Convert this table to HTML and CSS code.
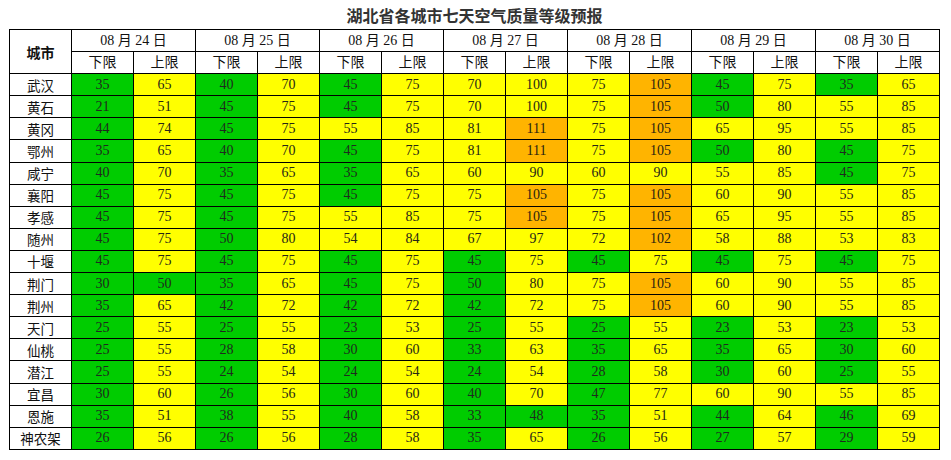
FILE: index.html
```html
<!DOCTYPE html>
<html lang="zh">
<head>
<meta charset="utf-8">
<title>湖北省各城市七天空气质量等级预报</title>
<link rel="stylesheet" href="styles.css">
</head>
<body>
<div class="page">
<div class="title">湖北省各城市七天空气质量等级预报</div>
<table class="aqi">
<thead>
<tr><th rowspan="2" class="city-h">城市</th><th colspan="2">08 月 24 日</th><th colspan="2">08 月 25 日</th><th colspan="2">08 月 26 日</th><th colspan="2">08 月 27 日</th><th colspan="2">08 月 28 日</th><th colspan="2">08 月 29 日</th><th colspan="2">08 月 30 日</th></tr>
<tr><th>下限</th><th>上限</th><th>下限</th><th>上限</th><th>下限</th><th>上限</th><th>下限</th><th>上限</th><th>下限</th><th>上限</th><th>下限</th><th>上限</th><th>下限</th><th>上限</th></tr>
</thead>
<tbody>
<tr><td class="city">武汉</td><td class="g">35</td><td class="y">65</td><td class="g">40</td><td class="y">70</td><td class="g">45</td><td class="y">75</td><td class="y">70</td><td class="y">100</td><td class="y">75</td><td class="o">105</td><td class="g">45</td><td class="y">75</td><td class="g">35</td><td class="y">65</td></tr>
<tr><td class="city">黄石</td><td class="g">21</td><td class="y">51</td><td class="g">45</td><td class="y">75</td><td class="g">45</td><td class="y">75</td><td class="y">70</td><td class="y">100</td><td class="y">75</td><td class="o">105</td><td class="g">50</td><td class="y">80</td><td class="y">55</td><td class="y">85</td></tr>
<tr><td class="city">黄冈</td><td class="g">44</td><td class="y">74</td><td class="g">45</td><td class="y">75</td><td class="y">55</td><td class="y">85</td><td class="y">81</td><td class="o">111</td><td class="y">75</td><td class="o">105</td><td class="y">65</td><td class="y">95</td><td class="y">55</td><td class="y">85</td></tr>
<tr><td class="city">鄂州</td><td class="g">35</td><td class="y">65</td><td class="g">40</td><td class="y">70</td><td class="g">45</td><td class="y">75</td><td class="y">81</td><td class="o">111</td><td class="y">75</td><td class="o">105</td><td class="g">50</td><td class="y">80</td><td class="g">45</td><td class="y">75</td></tr>
<tr><td class="city">咸宁</td><td class="g">40</td><td class="y">70</td><td class="g">35</td><td class="y">65</td><td class="g">35</td><td class="y">65</td><td class="y">60</td><td class="y">90</td><td class="y">60</td><td class="y">90</td><td class="y">55</td><td class="y">85</td><td class="g">45</td><td class="y">75</td></tr>
<tr><td class="city">襄阳</td><td class="g">45</td><td class="y">75</td><td class="g">45</td><td class="y">75</td><td class="g">45</td><td class="y">75</td><td class="y">75</td><td class="o">105</td><td class="y">75</td><td class="o">105</td><td class="y">60</td><td class="y">90</td><td class="y">55</td><td class="y">85</td></tr>
<tr><td class="city">孝感</td><td class="g">45</td><td class="y">75</td><td class="g">45</td><td class="y">75</td><td class="y">55</td><td class="y">85</td><td class="y">75</td><td class="o">105</td><td class="y">75</td><td class="o">105</td><td class="y">65</td><td class="y">95</td><td class="y">55</td><td class="y">85</td></tr>
<tr><td class="city">随州</td><td class="g">45</td><td class="y">75</td><td class="g">50</td><td class="y">80</td><td class="y">54</td><td class="y">84</td><td class="y">67</td><td class="y">97</td><td class="y">72</td><td class="o">102</td><td class="y">58</td><td class="y">88</td><td class="y">53</td><td class="y">83</td></tr>
<tr><td class="city">十堰</td><td class="g">45</td><td class="y">75</td><td class="g">45</td><td class="y">75</td><td class="g">45</td><td class="y">75</td><td class="g">45</td><td class="y">75</td><td class="g">45</td><td class="y">75</td><td class="g">45</td><td class="y">75</td><td class="g">45</td><td class="y">75</td></tr>
<tr><td class="city">荆门</td><td class="g">30</td><td class="g">50</td><td class="g">35</td><td class="y">65</td><td class="g">45</td><td class="y">75</td><td class="g">50</td><td class="y">80</td><td class="y">75</td><td class="o">105</td><td class="y">60</td><td class="y">90</td><td class="y">55</td><td class="y">85</td></tr>
<tr><td class="city">荆州</td><td class="g">35</td><td class="y">65</td><td class="g">42</td><td class="y">72</td><td class="g">42</td><td class="y">72</td><td class="g">42</td><td class="y">72</td><td class="y">75</td><td class="o">105</td><td class="y">60</td><td class="y">90</td><td class="y">55</td><td class="y">85</td></tr>
<tr><td class="city">天门</td><td class="g">25</td><td class="y">55</td><td class="g">25</td><td class="y">55</td><td class="g">23</td><td class="y">53</td><td class="g">25</td><td class="y">55</td><td class="g">25</td><td class="y">55</td><td class="g">23</td><td class="y">53</td><td class="g">23</td><td class="y">53</td></tr>
<tr><td class="city">仙桃</td><td class="g">25</td><td class="y">55</td><td class="g">28</td><td class="y">58</td><td class="g">30</td><td class="y">60</td><td class="g">33</td><td class="y">63</td><td class="g">35</td><td class="y">65</td><td class="g">35</td><td class="y">65</td><td class="g">30</td><td class="y">60</td></tr>
<tr><td class="city">潜江</td><td class="g">25</td><td class="y">55</td><td class="g">24</td><td class="y">54</td><td class="g">24</td><td class="y">54</td><td class="g">24</td><td class="y">54</td><td class="g">28</td><td class="y">58</td><td class="g">30</td><td class="y">60</td><td class="g">25</td><td class="y">55</td></tr>
<tr><td class="city">宜昌</td><td class="g">30</td><td class="y">60</td><td class="g">26</td><td class="y">56</td><td class="g">30</td><td class="y">60</td><td class="g">40</td><td class="y">70</td><td class="g">47</td><td class="y">77</td><td class="y">60</td><td class="y">90</td><td class="y">55</td><td class="y">85</td></tr>
<tr><td class="city">恩施</td><td class="g">35</td><td class="y">51</td><td class="g">38</td><td class="y">55</td><td class="g">40</td><td class="y">58</td><td class="g">33</td><td class="g">48</td><td class="g">35</td><td class="y">51</td><td class="g">44</td><td class="y">64</td><td class="g">46</td><td class="y">69</td></tr>
<tr><td class="city">神农架</td><td class="g">26</td><td class="y">56</td><td class="g">26</td><td class="y">56</td><td class="g">28</td><td class="y">58</td><td class="g">35</td><td class="y">65</td><td class="g">26</td><td class="y">56</td><td class="g">27</td><td class="y">57</td><td class="g">29</td><td class="y">59</td></tr>
</tbody>
</table>
</div>
</body>
</html>
```
FILE: styles.css
```css
html, body {
  margin: 0;
  padding: 0;
  background: #ffffff;
}

.page {
  padding: 0 11px 0 9px;
  font-family: "Liberation Serif", "Noto Sans CJK SC", serif;
  color: #111;
}

.title {
  height: 29px;
  line-height: 30px;
  text-align: center;
  font-family: "Noto Sans CJK SC", sans-serif;
  font-weight: 700;
  font-size: 16px;
  color: #333;
  width: 931px;
}

.aqi {
  width: 931px;
  border-collapse: collapse;
  table-layout: fixed;
  font-size: 14px;
}

.aqi tr {
  height: 22.1px;
}

.aqi th,
.aqi td {
  border: 1px solid #000;
  padding: 0;
  text-align: center;
  vertical-align: middle;
  line-height: 20px;
  font-weight: 400;
  white-space: nowrap;
  overflow: hidden;
}

.aqi th {
  color: #111;
  font-size: 14px;
}

.aqi .city-h {
  font-family: "Noto Sans CJK SC", sans-serif;
  font-weight: 700;
  font-size: 14px;
}

.aqi .city {
  font-family: "Noto Sans CJK SC", sans-serif;
  font-size: 13.5px;
  color: #111;
}

.aqi td.g {
  background: #00cc00;
  color: #1f2a1f;
}

.aqi td.y {
  background: #ffff00;
  color: #262616;
}

.aqi td.o {
  background: #ffb400;
  color: #2a2210;
}
```
